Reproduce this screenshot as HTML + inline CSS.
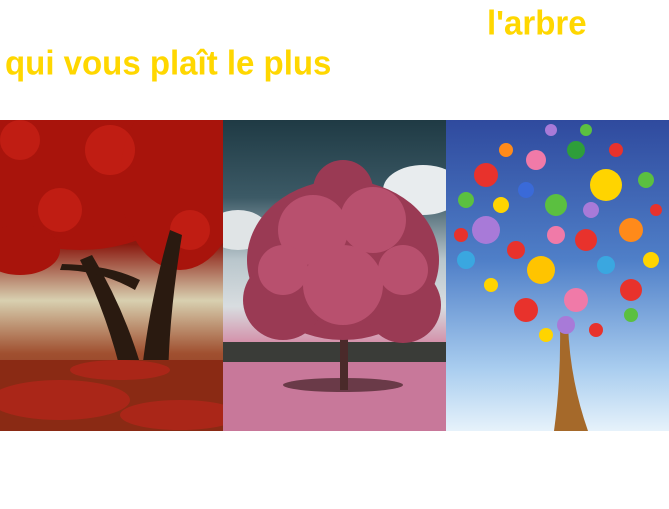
<!DOCTYPE html>
<html><head><meta charset="utf-8"><style>
html,body{margin:0;padding:0;background:#fff;width:669px;height:509px;overflow:hidden;position:relative;font-family:"Liberation Sans",sans-serif}
.t{position:absolute;color:#FFD700;font-weight:bold;font-size:33px;line-height:1;white-space:nowrap;transform:scaleY(1.05);transform-origin:left top}
.p{position:absolute;top:120px;height:311px;overflow:hidden}
</style></head><body>
<div class="t" style="left:487px;top:5px">l'arbre</div>
<div class="t" style="left:5px;top:45px">qui vous plaît le plus</div>

<div class="p" style="left:0;width:223px;background:linear-gradient(180deg,#5a1208 0%,#8a1a10 40%,#d8d0b0 58%,#a05030 75%,#7a2414 100%)">
<svg width="223" height="311">
<g fill="#a8140c"><ellipse cx="80" cy="50" rx="120" ry="80"/><ellipse cx="180" cy="60" rx="60" ry="90"/><ellipse cx="20" cy="130" rx="40" ry="25"/></g>
<g fill="#d02418" opacity=".6"><circle cx="20" cy="20" r="20"/><circle cx="110" cy="30" r="25"/><circle cx="190" cy="110" r="20"/><circle cx="60" cy="90" r="22"/></g>
<path d="M125 270 Q110 200 80 140 L92 135 Q125 190 142 250 Q150 180 170 110 L182 115 Q168 200 168 270 Z" fill="#2a1a10"/>
<path d="M135 170 Q100 150 60 150 L62 144 Q110 145 140 160 Z" fill="#2a1a10"/>
<rect x="0" y="240" width="223" height="71" fill="#8a2a14"/>
<g fill="#b3261a" opacity=".8"><ellipse cx="60" cy="280" rx="70" ry="20"/><ellipse cx="180" cy="295" rx="60" ry="15"/><ellipse cx="120" cy="250" rx="50" ry="10"/></g>
</svg></div>

<div class="p" style="left:223px;width:223px;background:linear-gradient(180deg,#1f3a44 0%,#3c5a66 25%,#b9c6cc 45%,#d8dde0 60%,#d27a9a 75%,#c86a8e 100%)">
<svg width="223" height="311">
<ellipse cx="200" cy="70" rx="40" ry="25" fill="#e8ecee"/><ellipse cx="15" cy="110" rx="30" ry="20" fill="#e0e4e6"/>
<rect x="0" y="222" width="223" height="22" fill="#3a3c38"/>
<rect x="0" y="242" width="223" height="69" fill="#c8789a"/>
<ellipse cx="120" cy="265" rx="60" ry="7" fill="#6a3a48"/>
<rect x="117" y="210" width="8" height="60" fill="#4a2a2a"/>
<g fill="#9a3a54"><ellipse cx="120" cy="140" rx="96" ry="80"/><circle cx="60" cy="180" r="40"/><circle cx="180" cy="185" r="38"/><circle cx="120" cy="70" r="30"/></g>
<g fill="#b8506e"><circle cx="90" cy="110" r="35"/><circle cx="150" cy="100" r="33"/><circle cx="120" cy="165" r="40"/><circle cx="60" cy="150" r="25"/><circle cx="180" cy="150" r="25"/></g>
</svg></div>

<div class="p" style="left:446px;width:223px;background:linear-gradient(180deg,#2f4a9e 0%,#4f7fc8 45%,#a9cdef 80%,#e6f2fb 100%)">
<svg width="223" height="311">
<path d="M108 311 Q115 260 114 205 L122 205 Q124 260 142 311 Z" fill="#a5692a"/>
<g>
<circle cx="40" cy="55" r="12" fill="#e8322c"/><circle cx="160" cy="65" r="16" fill="#ffd400"/><circle cx="90" cy="40" r="10" fill="#f07aa8"/>
<circle cx="130" cy="30" r="9" fill="#2e9e3a"/><circle cx="40" cy="110" r="14" fill="#a87ad8"/><circle cx="185" cy="110" r="12" fill="#ff8a1a"/>
<circle cx="95" cy="150" r="14" fill="#ffc400"/><circle cx="140" cy="120" r="11" fill="#e8322c"/><circle cx="20" cy="140" r="9" fill="#3aa7e0"/>
<circle cx="80" cy="190" r="12" fill="#e8322c"/><circle cx="130" cy="180" r="12" fill="#f07aa8"/><circle cx="185" cy="170" r="11" fill="#e8322c"/>
<circle cx="110" cy="85" r="11" fill="#5bc040"/><circle cx="205" cy="140" r="8" fill="#ffd400"/><circle cx="20" cy="80" r="8" fill="#5bc040"/>
<circle cx="120" cy="205" r="9" fill="#a87ad8"/><circle cx="80" cy="70" r="8" fill="#3a6ad8"/><circle cx="45" cy="165" r="7" fill="#ffd400"/>
<circle cx="60" cy="30" r="7" fill="#ff8a1a"/><circle cx="170" cy="30" r="7" fill="#e8322c"/><circle cx="200" cy="60" r="8" fill="#5bc040"/>
<circle cx="70" cy="130" r="9" fill="#e8322c"/><circle cx="160" cy="145" r="9" fill="#3aa7e0"/><circle cx="110" cy="115" r="9" fill="#f07aa8"/>
<circle cx="55" cy="85" r="8" fill="#ffd400"/><circle cx="145" cy="90" r="8" fill="#a87ad8"/><circle cx="185" cy="195" r="7" fill="#5bc040"/>
<circle cx="100" cy="215" r="7" fill="#ffd400"/><circle cx="150" cy="210" r="7" fill="#e8322c"/><circle cx="15" cy="115" r="7" fill="#e8322c"/>
<circle cx="105" cy="10" r="6" fill="#a87ad8"/><circle cx="140" cy="10" r="6" fill="#5bc040"/><circle cx="210" cy="90" r="6" fill="#e8322c"/>
</g></svg></div>
</body></html>
